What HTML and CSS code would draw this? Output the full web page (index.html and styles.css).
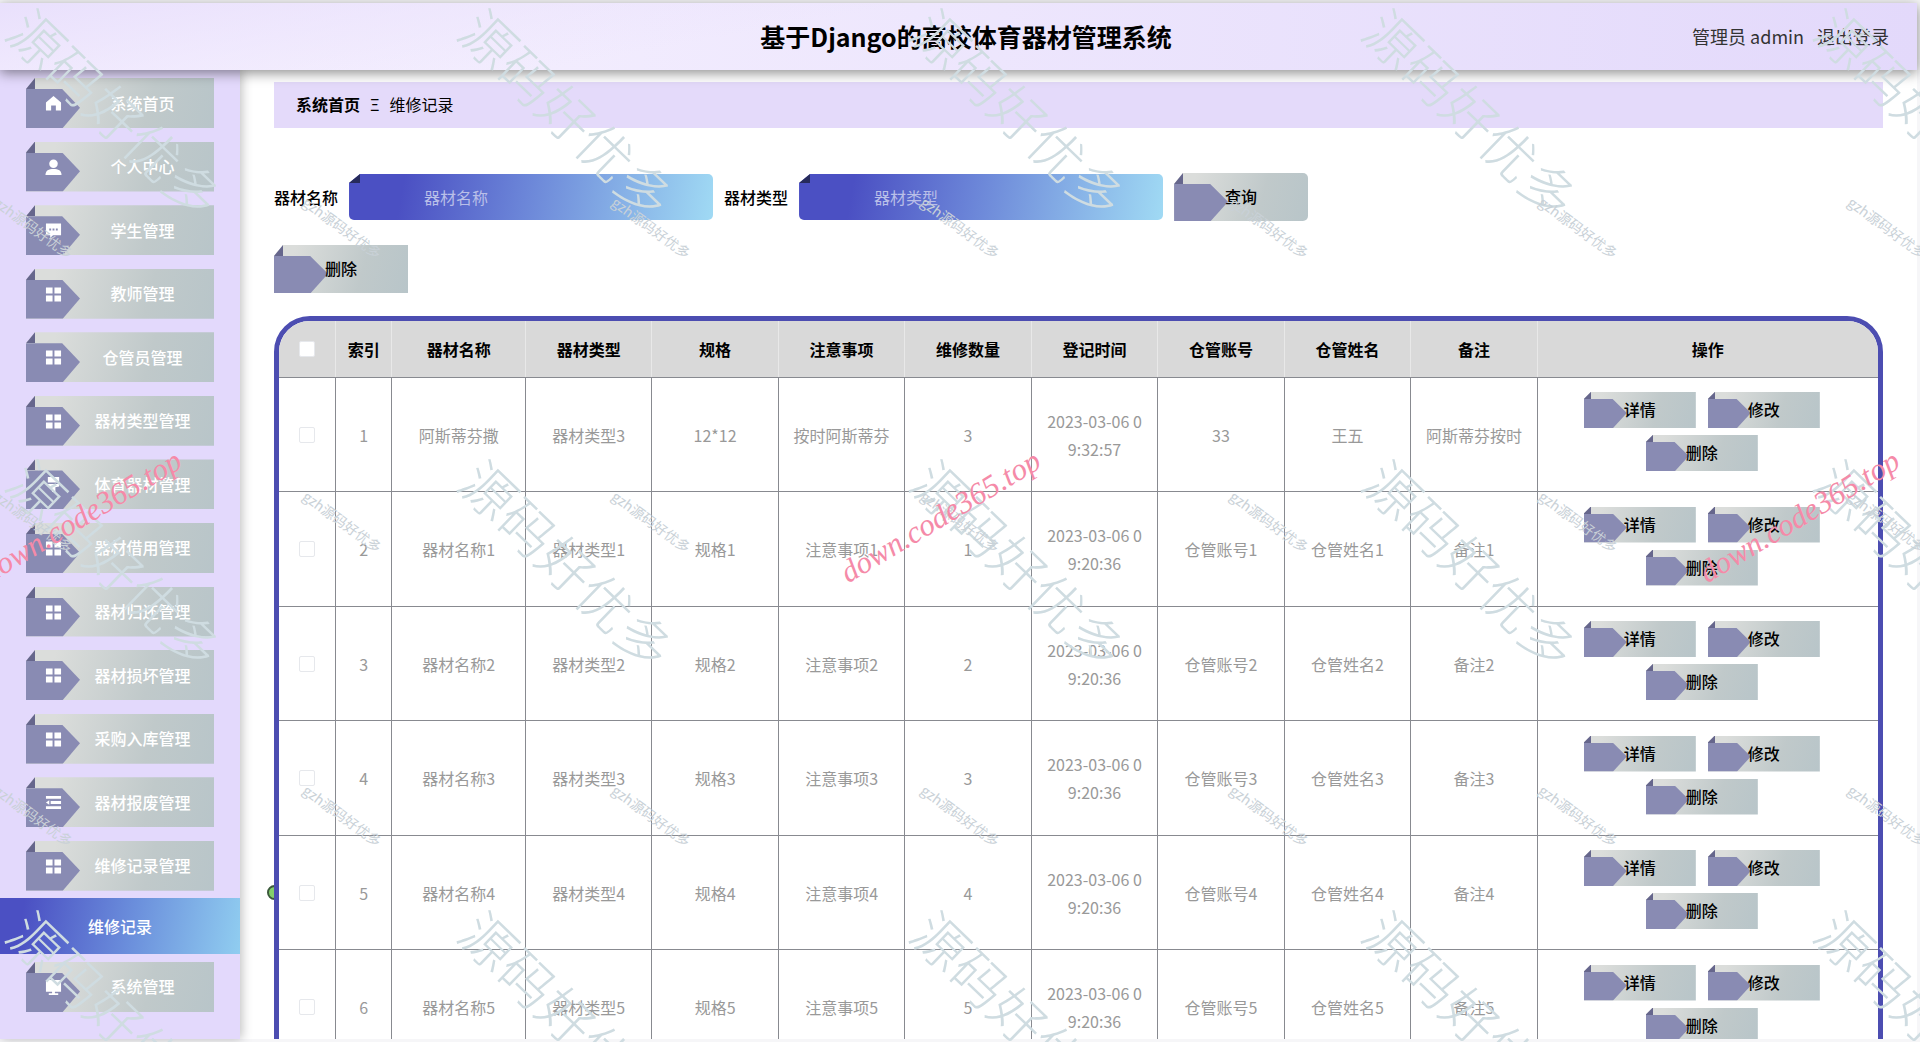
FILE: index.html
```html
<!DOCTYPE html>
<html lang="zh-CN">
<head>
    <meta charset="UTF-8">
    <meta name="viewport" content="width=device-width, initial-scale=1.0">
    <title>基于Django的高校体育器材管理系统</title>
    <link rel="stylesheet" href="styles.css">
</head>
<body>
    <svg class="sprite" aria-hidden="true">
        <symbol id="home" viewBox="0 0 18 18"><path d="M9 1 L17 8 V16.500 H11.500 V11 H6.500 V16.500 H1 V8 Z"/></symbol>
        <symbol id="user" viewBox="0 0 18 18"><circle cx="9" cy="5" r="4.500"/><path d="M.5 17 C.5 12 4 10.500 9 10.500 S17.500 12 17.500 17 Z"/></symbol>
        <symbol id="chat" viewBox="0 0 18 18"><path fill-rule="evenodd" d="M1 1.500 H17 V14 H8.500 L5.500 17 V14 H1 Z M4.500 7 V9 H6.500 V7 Z M8 7 V9 H10 V7 Z M11.500 7 V9 H13.500 V7 Z"/></symbol>
        <symbol id="grid" viewBox="0 0 18 18"><path d="M1 1.500 H8 V8 H1 Z M10 1.500 H17 V8 H10 Z M1 10 H8 V16.500 H1 Z M10 10 H17 V16.500 H10 Z"/></symbol>
        <symbol id="brush" viewBox="0 0 18 18"><path d="M3 1 H15 V7 H3 Z M3 8.500 H15 V11 L11 12 V17 H7.500 V12 L3 11 Z"/></symbol>
        <symbol id="list" viewBox="0 0 18 18"><path d="M1 2 H17 V5 H1 Z M6 7.500 H17 V10.500 H6 Z M1 13 H17 V16 H1 Z M1 9 L4.500 6.500 V11.500 Z"/></symbol>
        <symbol id="screen" viewBox="0 0 18 18"><path d="M1 1 H17 V13.500 H10.500 V15 H14 V17 H4 V15 H7.500 V13.500 H1 Z"/></symbol>
    </svg>

    <header class="header">
        <h1>基于Django的高校体育器材管理系统</h1>
        <div class="user">
            <span>管理员 admin</span>
            <a href="#">退出登录</a>
        </div>
    </header>

    <div class="container">
        <nav class="sidebar">
            <a class="tag" href="#"><svg><use href="#home"/></svg>系统首页</a>
            <a class="tag" href="#"><svg><use href="#user"/></svg>个人中心</a>
            <a class="tag" href="#"><svg><use href="#chat"/></svg>学生管理</a>
            <a class="tag" href="#"><svg><use href="#grid"/></svg>教师管理</a>
            <a class="tag" href="#"><svg><use href="#grid"/></svg>仓管员管理</a>
            <a class="tag" href="#"><svg><use href="#grid"/></svg>器材类型管理</a>
            <a class="tag" href="#"><svg><use href="#brush"/></svg>体育器材管理</a>
            <a class="tag" href="#"><svg><use href="#grid"/></svg>器材借用管理</a>
            <a class="tag" href="#"><svg><use href="#grid"/></svg>器材归还管理</a>
            <a class="tag" href="#"><svg><use href="#grid"/></svg>器材损坏管理</a>
            <a class="tag" href="#"><svg><use href="#grid"/></svg>采购入库管理</a>
            <a class="tag" href="#"><svg><use href="#list"/></svg>器材报废管理</a>
            <a class="tag" href="#"><svg><use href="#grid"/></svg>维修记录管理</a>
            <a class="active" href="#">维修记录</a>
            <a class="tag" href="#"><svg><use href="#screen"/></svg>系统管理</a>
        </nav>

        <main class="main">
            <div class="breadcrumb"><b>系统首页</b><span>Ξ</span><span>维修记录</span></div>

            <form class="search">
                <label for="name">器材名称</label>
                <div class="field"><input type="text" id="name" placeholder="器材名称"></div>
                <label for="type">器材类型</label>
                <div class="field"><input type="text" id="type" placeholder="器材类型"></div>
                <button class="tag btn round" type="button">查询</button>
            </form>

            <button class="tag btn" type="button">删除</button>

            <div class="list">
                <span class="dot"></span>
                <div class="table-box">
                    <table>
                        <colgroup>
                            <col class="narrow"><col class="narrow"><col class="wide">
                            <col><col><col><col><col><col><col><col>
                            <col class="actions-col">
                        </colgroup>
                        <thead>
                            <tr>
                                <th><input type="checkbox" aria-label="全选"></th>
                                <th>索引</th>
                                <th>器材名称</th>
                                <th>器材类型</th>
                                <th>规格</th>
                                <th>注意事项</th>
                                <th>维修数量</th>
                                <th>登记时间</th>
                                <th>仓管账号</th>
                                <th>仓管姓名</th>
                                <th>备注</th>
                                <th>操作</th>
                            </tr>
                        </thead>
                        <tbody id="rows"></tbody>
                    </table>
                </div>
            </div>
        </main>
    </div>

    <div class="marks" aria-hidden="true">
        <div class="marks-big" id="big"></div>
        <div class="marks-small" id="small"></div>
        <div class="marks-site" id="site"></div>
    </div>

    <script>
        var data = [
            ["阿斯蒂芬撒", "器材类型3", "12*12", "按时阿斯蒂芬", "3", "2023-03-06 09:32:57", "33", "王五", "阿斯蒂芬按时"]
        ];
        for (var i = 1; i <= 5; i++) {
            data.push(["器材名称" + i, "器材类型" + i, "规格" + i, "注意事项" + i, i, "2023-03-06 09:20:36", "仓管账号" + i, "仓管姓名" + i, "备注" + i]);
        }

        var html = "";
        data.forEach(function(row, n) {
            html += '<tr><td><input type="checkbox" aria-label="选择' + (n + 1) + '"></td><td>' + (n + 1) + '</td>';
            row.forEach(function(cell) {
                html += '<td>' + cell + '</td>';
            });
            html += '<td><div class="actions">';
            ["详情", "修改", "删除"].forEach(function(name) {
                html += '<button class="tag btn small" type="button">' + name + '</button>';
            });
            html += '</div></td></tr>';
        });
        document.getElementById("rows").innerHTML = html;

        function fill(id, text, count) {
            document.getElementById(id).innerHTML = ("<span>" + text + "</span>").repeat(count);
        }
        fill("big", "源码好优多", 15);
        fill("small", "gzh源码好优多", 21);
        fill("site", "down.code365.top", 3);
    </script>
</body>
</html>
```
FILE: styles.css
```css
*{
    margin: 0;
    padding: 0;
    box-sizing: border-box;
}

body{
    display: flex;
    flex-direction: column;
    height: 100vh;
    padding: 3px 3px 3px 0;
    overflow: hidden;
    position: relative;
    background-color: #f6f6f8;
    font-family: "Noto Sans CJK SC", sans-serif;
    font-size: 16px;
    line-height: 28px;
    color: #000;
}

a{
    color: inherit;
    text-decoration: none;
}

button, input{
    font: inherit;
    border: none;
    outline: none;
}

.sprite{
    display: none;
}

/* header */
.header{
    display: grid;
    grid-template-columns: 1fr auto 1fr;
    align-items: center;
    flex: none;
    height: 67px;
    padding: 0 28px 2px 43px;
    position: relative;
    z-index: 2;
    background: linear-gradient(170deg, #e9e0fc, rgba(233,224,252,0) 40%), linear-gradient(90deg, #f8f4ff, #e3d9fb);
    box-shadow: 0 3px 12px rgba(0,0,0,0.45);
}

.header h1{
    grid-column: 2;
    font-size: 25px;
    font-weight: 700;
}

.user{
    display: flex;
    justify-content: flex-end;
    gap: 13px;
    font-size: 18px;
    color: #333;
}

.container{
    display: flex;
    flex: 1;
    min-height: 0;
    background-color: #fff;
}

/* sidebar */
.sidebar{
    display: flex;
    flex-direction: column;
    justify-content: space-between;
    flex: none;
    width: 240px;
    padding: 8px 26px 27px;
    background-color: #e3d9fc;
    box-shadow: 2px 0 10px rgba(0,0,0,0.25);
    color: #fff;
    font-weight: 500;
}

.sidebar .tag{
    padding: 0 0 1px 45px;
    isolation: isolate;
}

.sidebar svg{
    position: absolute;
    left: 19px;
    top: 17px;
    width: 17px;
    height: 17px;
    fill: #fff;
    z-index: 1;
}

.active{
    display: flex;
    align-items: center;
    justify-content: center;
    height: 56px;
    margin: -6px -26px;
    background: linear-gradient(100deg, #4b50c3 10%, #6b8fdc 55%, #90cdf0);
}

/* folded ribbon, used by the menu and by every button */
.tag{
    --fold: 9px;
    --drop: 11px;
    --tip: 54px;
    display: flex;
    align-items: center;
    justify-content: center;
    height: 50px;
    position: relative;
    background: linear-gradient(105deg, #dbdddb 15%, #c0c9ca 65%, #b8c5c9);
    clip-path: polygon(var(--fold) 0, 100% 0, 100% 100%, 0 100%, 0 var(--drop));
}

.tag::before{
    content: "";
    position: absolute;
    left: 0;
    top: var(--drop);
    bottom: 0;
    width: var(--tip);
    background-color: #898bb3;
    clip-path: polygon(0 0, 67% 0, 100% 48%, 68% 100%, 0 100%);
    z-index: -1;
}

.tag::after{
    content: "";
    position: absolute;
    left: 0;
    top: 0;
    width: var(--fold);
    height: var(--drop);
    background-color: #66668c;
}

.btn{
    width: 134px;
    height: 48px;
    padding-bottom: 2px;
    isolation: isolate;
    font-weight: 500;
    cursor: pointer;
}

.round{
    border-radius: 5px;
}

.small{
    --fold: 7px;
    --drop: 7px;
    --tip: 43px;
    width: 112px;
    height: 36px;
}

/* content */
.main{
    flex: 1;
    min-width: 0;
    padding: 12px 34px 0;
    overflow: hidden;
}

.breadcrumb{
    display: flex;
    align-items: center;
    gap: 10px;
    height: 46px;
    padding: 0 22px 2px;
    background-color: #e4dafa;
}

.search{
    display: flex;
    align-items: center;
    gap: 11px;
    padding: 45px 0 24px;
}

.search label{
    font-weight: 500;
}

.field{
    --fold: 11px;
    width: 364px;
    height: 46px;
    position: relative;
    background: linear-gradient(100deg, #4b50c3 15%, #6b85d8 48%, #a0daf4);
    border-radius: 5px;
    clip-path: polygon(var(--fold) 0, 100% 0, 100% 100%, 0 100%, 0 9px);
}

.field::before{
    content: "";
    position: absolute;
    left: 0;
    top: 0;
    width: 11px;
    height: 9px;
    background-color: #272b5c;
}

.field input{
    width: 100%;
    height: 100%;
    padding-left: 75px;
    background: none;
    color: #fff;
}

.field input::placeholder{
    color: #b9bfe8;
}

.list{
    position: relative;
    margin-top: 23px;
}

.dot{
    position: absolute;
    left: -7px;
    top: 569px;
    width: 15px;
    height: 15px;
    border: 2px solid #3c5a3c;
    border-radius: 50%;
    background-color: #83cf6b;
}

.table-box{
    position: relative;
    border: 5px solid #4c4db1;
    border-radius: 36px 36px 0 0;
    background-color: #fff;
    overflow: hidden;
}

table{
    width: 100%;
    table-layout: fixed;
    border-spacing: 0;
    text-align: center;
}

col{
    width: 126px;
}

.narrow{
    width: 56px;
}

.wide{
    width: 133px;
}

.actions-col{
    width: 340px;
}

th{
    height: 56px;
    background-color: #d9d9d9;
    font-weight: 700;
}

th + th{
    border-left: 1px solid #e8e8e8;
}

td{
    height: 114px;
    padding: 0 12px;
    border-top: 1px solid #888a90;
    color: #999;
    word-break: break-all;
}

tr:nth-child(even) td{
    height: 115px;
}

td + td{
    border-left: 1px solid #888a90;
}

input[type="checkbox"]{
    appearance: none;
    display: block;
    width: 16px;
    height: 16px;
    margin: auto;
    border: 1px solid #e6e8ec;
    border-radius: 2px;
    background-color: #fff;
}

.actions{
    display: flex;
    flex-wrap: wrap;
    justify-content: center;
    gap: 7px 12px;
    padding: 0 12px 6px 0;
}

/* watermarks */
.marks{
    position: absolute;
    inset: 0;
    overflow: hidden;
    z-index: 3;
    pointer-events: none;
    white-space: nowrap;
}

.marks div{
    display: grid;
    position: absolute;
}

.marks span{
    transform-origin: 0 50%;
}

.marks-big{
    left: 19px;
    top: -11px;
    grid-template-columns: repeat(5, 452px);
    grid-auto-rows: 451px;
    font-size: 54px;
    font-weight: 300;
    line-height: 60px;
    color: #cfdce1;
}

.marks-big span{
    height: 60px;
    transform: rotate(44deg);
}

.marks-small{
    left: -4px;
    top: 190px;
    grid-template-columns: repeat(7, 309px);
    grid-auto-rows: 294px;
    font-size: 14px;
    line-height: 20px;
    color: #c9d1d7;
}

.marks-small span{
    height: 20px;
    transform: rotate(36deg);
}

.marks-site{
    left: -16px;
    top: 561px;
    grid-template-columns: repeat(3, 859px);
    font-family: "Liberation Serif", serif;
    font-size: 31px;
    font-style: italic;
    color: #f58aa8;
}

.marks-site span{
    height: 28px;
    transform: rotate(-31deg);
}
```
